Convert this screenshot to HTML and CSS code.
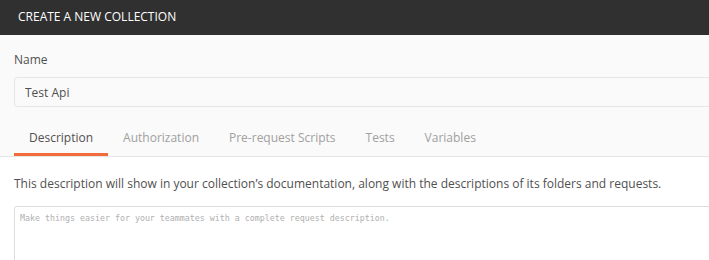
FILE: index.html
```html
<!DOCTYPE html>
<html lang="en">
<head>
    <meta charset="UTF-8">
    <title>Create a new collection</title>
    <link rel="stylesheet" href="styles.css">
</head>
<body>
    <div class="modal">
        <div class="modal-header">CREATE A NEW COLLECTION</div>

        <div class="modal-top">
            <div class="form-group">
                <label for="name">Name</label>
                <input type="text" id="name" value="Test Api">
            </div>

            <div class="tabs">
                <div class="tab active">Description</div>
                <div class="tab">Authorization</div>
                <div class="tab">Pre-request Scripts</div>
                <div class="tab">Tests</div>
                <div class="tab">Variables</div>
            </div>
        </div>

        <div class="modal-body">
            <p class="hint">This description will show in your collection’s documentation, along with the descriptions of its folders and requests.</p>
            <textarea placeholder="Make things easier for your teammates with a complete request description."></textarea>
        </div>
    </div>
</body>
</html>
```

FILE: styles.css
```css
:root {
    --dark: #303030;
    --text: #505050;
    --muted: #a0a0a0;
    --border: #e6e6e6;
    --accent: #f26b3a;
}

* {
    box-sizing: border-box;
    margin: 0;
    padding: 0;
}

body {
    font-family: 'Open Sans', sans-serif;
    background: #fff;
    overflow: hidden;
}

.modal {
    width: 730px;
    height: 260px;
    overflow: hidden;
}

.modal-header {
    height: 35px;
    background: var(--dark);
    color: #fff;
    font-size: 12px;
    line-height: 33px;
    padding-left: 18px;
}

.modal-top {
    background: #fafafa;
    padding: 16px 0 0 14px;
    border-bottom: 1px solid var(--border);
}

.form-group label {
    display: block;
    color: var(--text);
    font-size: 12px;
    line-height: 18px;
    margin-bottom: 8px;
}

.form-group input {
    display: block;
    width: 100%;
    height: 30px;
    padding: 0 10px;
    border: 1px solid var(--border);
    border-radius: 3px;
    background: #fafafa;
    font-family: inherit;
    font-size: 12px;
    color: var(--text);
    outline: none;
}

.tabs {
    display: flex;
    margin-top: 15px;
}

.tab {
    padding: 0 15px;
    height: 34px;
    line-height: 31px;
    font-size: 12px;
    color: var(--muted);
    border-bottom: 3px solid transparent;
}

.tab.active {
    color: var(--text);
    border-bottom-color: var(--accent);
}

.modal-body {
    padding: 17px 0 0 14px;
}

.hint {
    font-size: 12px;
    line-height: 20px;
    color: var(--text);
    margin-bottom: 12px;
}

textarea {
    display: block;
    width: 100%;
    height: 80px;
    padding: 6px 5px;
    border: 1px solid #dcdcdc;
    border-radius: 3px;
    font-family: 'DejaVu Sans Mono', monospace;
    font-size: 8.3px;
    color: var(--text);
    resize: none;
    outline: none;
}

textarea::placeholder {
    color: #b0b0b0;
}
```
